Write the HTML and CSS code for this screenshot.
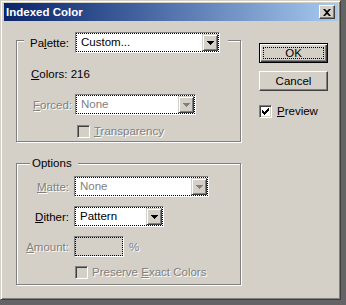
FILE: index.html
```html
<!DOCTYPE html>
<html lang="en">
<head>
    <meta charset="UTF-8">
    <title>Indexed Color</title>
    <link rel="stylesheet" href="styles.css">
</head>
<body>
    <div class="window">
        <div class="titlebar">
            <span class="title">Indexed Color</span>
            <span class="close-btn">
                <svg width="8" height="7" viewBox="0 0 8 7"><path d="M0 0h2l2 2 2-2h2L5 3.5 8 7H6L4 5 2 7H0l3-3.5z" fill="#000"/></svg>
            </span>
        </div>

        <div class="dialog">
            <div class="left">
                <!-- Palette group -->
                <div class="group group-palette">
                    <div class="group-head head-palette">
                        <span>Pa<u>l</u>ette:</span>
                        <span class="combo combo-palette">
                            <span class="combo-inner">
                                <span class="combo-text">Custom...</span>
                                <span class="combo-btn"><svg width="7" height="4" viewBox="0 0 7 4"><path d="M0 0H7V1H6V2H5V3H4V4H3V3H2V2H1V1H0Z" fill="#000"/></svg></span>
                            </span>
                        </span>
                    </div>
                    <div class="colors-row"><u>C</u>olors: 216</div>
                    <div class="field-row row-forced disabled">
                        <span class="label label-wide"><u>F</u>orced:</span>
                        <span class="combo combo-forced">
                            <span class="combo-inner">
                                <span class="combo-text">None</span>
                                <span class="combo-btn"><svg width="7" height="4" viewBox="0 0 7 4"><path d="M0 0H7V1H6V2H5V3H4V4H3V3H2V2H1V1H0Z" fill="#808080"/></svg></span>
                            </span>
                        </span>
                    </div>
                    <div class="check-row row-transparency disabled">
                        <span class="checkbox"></span>
                        <span><u>T</u>ransparency</span>
                    </div>
                </div>

                <!-- Options group -->
                <div class="group group-options">
                    <div class="group-head head-options">Options</div>
                    <div class="field-row row-matte disabled">
                        <span class="label"><u>M</u>atte:</span>
                        <span class="combo combo-matte">
                            <span class="combo-inner">
                                <span class="combo-text">None</span>
                                <span class="combo-btn"><svg width="7" height="4" viewBox="0 0 7 4"><path d="M0 0H7V1H6V2H5V3H4V4H3V3H2V2H1V1H0Z" fill="#808080"/></svg></span>
                            </span>
                        </span>
                    </div>
                    <div class="field-row row-next">
                        <span class="label"><u>D</u>ither:</span>
                        <span class="combo combo-dither">
                            <span class="combo-inner">
                                <span class="combo-text">Pattern</span>
                                <span class="combo-btn"><svg width="7" height="4" viewBox="0 0 7 4"><path d="M0 0H7V1H6V2H5V3H4V4H3V3H2V2H1V1H0Z" fill="#000"/></svg></span>
                            </span>
                        </span>
                    </div>
                    <div class="field-row row-next disabled">
                        <span class="label"><u>A</u>mount:</span>
                        <span class="combo textfield"><span class="combo-inner"></span></span>
                        <span class="percent">%</span>
                    </div>
                    <div class="check-row row-preserve disabled">
                        <span class="checkbox"></span>
                        <span>Preserve <u>E</u>xact Colors</span>
                    </div>
                </div>
            </div>

            <div class="right">
                <button class="btn btn-default"><span class="focus">OK</span></button>
                <button class="btn btn-cancel">Cancel</button>
                <div class="check-row row-preview">
                    <span class="checkbox checked">
                        <svg width="7" height="7" viewBox="0 0 7 7"><path d="M0 2H1V3H2V4H3V3H4V2H5V1H6V0H7V3H6V4H5V5H4V6H3V7H2V6H1V5H0Z" fill="#000"/></svg>
                    </span>
                    <span><u>P</u>review</span>
                </div>
            </div>
        </div>
    </div>
</body>
</html>
```

FILE: styles.css
```css
body {
    margin: 0;
    background-color: #646464;
    font-family: "Liberation Sans", Arial, sans-serif;
    font-size: 11.5px;
    color: #000;
}
u {
    text-decoration: underline;
    text-underline-offset: 1px;
}
.window {
    width: 341px;
    height: 300px;
    box-sizing: border-box;
    background-color: #d4d0c8;
    border: 1px solid;
    border-color: #d4d0c8 #404040 #404040 #d4d0c8;
    box-shadow: inset 1px 1px #fff, inset -1px -1px #808080;
    padding: 2px 2px 2px 3px;
}
.titlebar {
    height: 18px;
    display: flex;
    align-items: center;
    justify-content: space-between;
    padding: 0 3px 0 2px;
    background: linear-gradient(to right, #0a246a, #3a5a98 35%, #a6caf0);
}
.title {
    color: #fff;
    font-weight: bold;
    font-size: 11.5px;
}
.close-btn {
    width: 16px;
    height: 14px;
    box-sizing: border-box;
    background-color: #d4d0c8;
    border: 1px solid;
    border-color: #fff #404040 #404040 #fff;
    box-shadow: inset -1px -1px #808080;
    display: flex;
    align-items: center;
    justify-content: center;
}
.dialog {
    display: flex;
    padding: 19px 0 0 12px;
}
.left {
    width: 225px;
}
.group {
    box-sizing: border-box;
    border: 1px solid #808080;
    box-shadow: inset 1px 1px #fff, 1px 1px #fff;
}
.group-palette {
    height: 102px;
}
.group-options {
    height: 122px;
    margin-top: 21px;
}
.group-head {
    display: flex;
    align-items: center;
    width: max-content;
    background-color: #d4d0c8;
}
.head-palette {
    margin: -9px 0 0 7px;
    padding: 0 8px 0 6px;
    gap: 6px;
}
.head-options {
    margin: -8px 0 0 13px;
    padding: 0 6px 0 2px;
    line-height: 14px;
}
.colors-row {
    margin-top: 14px;
    padding-left: 14px;
    line-height: 14px;
}
.field-row {
    display: flex;
    align-items: center;
}
.label {
    width: 52px;
    text-align: right;
    margin-right: 5px;
}
.label-wide {
    width: 55px;
    margin-right: 3px;
}
.row-forced {
    margin-top: 13px;
}
.row-matte {
    margin-top: 6px;
}
.row-next {
    margin-top: 9px;
}
.disabled {
    color: #808080;
    text-shadow: 1px 1px 0 #fff;
}
.combo {
    display: block;
    height: 21px;
    box-sizing: border-box;
    border: 1px solid;
    border-color: #808080 #fff #fff #808080;
}
.combo-inner {
    display: flex;
    height: 100%;
    box-sizing: border-box;
    border: 1px dotted #000;
    background-color: #fff;
}
.combo-text {
    flex: 1;
    padding-left: 4px;
    line-height: 17px;
}
.combo-btn {
    width: 16px;
    box-sizing: border-box;
    background-color: #d4d0c8;
    border: 1px solid;
    border-color: #d4d0c8 #404040 #404040 #d4d0c8;
    box-shadow: inset 1px 1px #fff, inset -1px -1px #808080;
    display: flex;
    align-items: center;
    justify-content: center;
}
.combo-palette {
    width: 145px;
}
.combo-forced {
    width: 121px;
}
.combo-matte {
    width: 135px;
}
.combo-dither {
    width: 90px;
}
.textfield {
    width: 50px;
}
.textfield .combo-inner {
    background-color: #d4d0c8;
}
.percent {
    margin-left: 5px;
}
.check-row {
    display: flex;
    align-items: center;
    gap: 4px;
    line-height: 13px;
}
.row-transparency {
    margin-top: 10px;
    padding-left: 60px;
}
.row-preserve {
    margin-top: 9px;
    padding-left: 58px;
}
.checkbox {
    width: 13px;
    height: 13px;
    box-sizing: border-box;
    border: 1px solid;
    border-color: #808080 #fff #fff #808080;
    box-shadow: inset 1px 1px #404040, inset -1px -1px #d4d0c8;
    background-color: #d4d0c8;
    display: flex;
    align-items: center;
    justify-content: center;
}
.checkbox.checked {
    background-color: #fff;
}
.right {
    display: flex;
    flex-direction: column;
    margin: 3px 0 0 18px;
}
.btn {
    width: 69px;
    height: 20px;
    box-sizing: border-box;
    padding: 0;
    font-family: inherit;
    font-size: 11.5px;
    color: #000;
    background-color: #d4d0c8;
    display: flex;
    align-items: center;
    justify-content: center;
}
.btn-default {
    border: 1px solid #000;
    box-shadow: inset 1px 1px #fff, inset -1px -1px #404040, inset -2px -2px #808080;
    padding: 3px;
}
.focus {
    flex: 1;
    align-self: stretch;
    border: 1px dotted #000;
    display: flex;
    align-items: center;
    justify-content: center;
}
.btn-cancel {
    margin-top: 8px;
    border: 1px solid;
    border-color: #fff #404040 #404040 #fff;
    box-shadow: inset -1px -1px #808080;
}
.row-preview {
    margin-top: 14px;
    gap: 5px;
}
```
